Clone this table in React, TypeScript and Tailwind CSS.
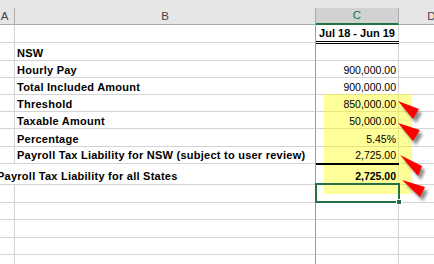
import React from 'react';

type Row = { h: string; label?: string; value?: string; bold?: boolean };

const rows: Row[] = [
  { h: 'h-[18px]', label: 'NSW' },
  { h: 'h-[17px]', label: 'Hourly Pay', value: '900,000.00' },
  { h: 'h-[17px]', label: 'Total Included Amount', value: '900,000.00' },
  { h: 'h-[17px]', label: 'Threshold', value: '850,000.00' },
  { h: 'h-[17px]', label: 'Taxable Amount', value: '50,000.00' },
  { h: 'h-[18px]', label: 'Percentage', value: '5.45%' },
];

const tail = ['h-[17px]', 'h-[18px]', 'h-[17px]', 'h-[17px]'];

const colA = 'w-[20px] -ml-[5px] shrink-0 border-b border-r border-[#d4d4d4]';
const colB = 'w-[301px] shrink-0 flex items-end pl-[2px] border-b border-b-[#d4d4d4] border-r border-r-[#9e9e9e]';
const colC = 'relative w-[83px] shrink-0 flex items-end justify-end pr-[2px] border-b border-r border-[#d4d4d4]';
const colD = 'w-[66px] shrink-0 border-b border-r border-[#d4d4d4]';

const label = 'whitespace-nowrap text-[11px] leading-[13px] font-bold tracking-[0.25px] text-black';
const num = 'relative z-30 whitespace-nowrap text-[10.5px] leading-[13px] text-black';

// red callout arrows pointing at the numbers
const arrows = [
  '398,101 419,109 413,119',
  '398,123 420,130 413,141',
  '400,155 422,166 418,176',
  '402,180 425,187 420,197',
];

export default function App() {
  return (
    <div className="relative w-[434px] h-[264px] overflow-hidden bg-white font-['Liberation_Sans',Arial,sans-serif]">
      {/* column headers */}
      <div className="h-[8px] bg-[#e6e6e6]" />
      <div className="flex h-[17px] bg-[#e6e6e6] text-[11.5px] leading-[13px] text-[#444]">
        <div className="w-[20px] -ml-[5px] shrink-0 flex items-end justify-center pb-[1px] border-b border-r border-[#ababab]">A</div>
        <div className="w-[301px] shrink-0 flex items-end justify-center pb-[1px] border-b border-r border-[#ababab]">B</div>
        <div className="w-[83px] shrink-0 flex items-end justify-center pb-[1px] bg-[#d2d2d2] text-[#217346] border-b-2 border-b-[#217346] border-r border-r-[#ababab]">C</div>
        <div className="w-[66px] shrink-0 flex items-end justify-center pb-[1px] border-b border-r border-[#ababab]">D</div>
      </div>

      {/* row 1 */}
      <div className="flex h-[18px]">
        <div className={colA} />
        <div className={colB} />
        <div className="relative w-[83px] shrink-0 flex items-end justify-center pb-[2px] border-b border-r border-[#d4d4d4]">
          <span className="whitespace-nowrap text-[11px] leading-[13px] font-bold text-black">Jul 18 - Jun 19</span>
          <div className="absolute left-0 -right-px top-[16px] h-[3px] z-10 bg-white border-y border-black" />
        </div>
        <div className={colD} />
      </div>

      {rows.map((r) => (
        <div key={r.label} className={`flex ${r.h}`}>
          <div className={colA} />
          <div className={colB}>
            <span className={label}>{r.label}</span>
          </div>
          <div className={colC}>
            {r.value && <span className={num}>{r.value}</span>}
          </div>
          <div className={colD} />
        </div>
      ))}

      <div className="flex h-[17px]">
        <div className={colA} />
        <div className={`${colB} pb-px`}>
          <span className={label}>Payroll Tax Liability for NSW (subject to user review)</span>
        </div>
        <div className={`${colC} pb-px`}>
          <span className={num}>2,725.00</span>
          <div className="absolute left-0 -right-px -bottom-[2px] h-[2px] z-30 bg-black" />
        </div>
        <div className={colD} />
      </div>

      {/* all states total */}
      <div className="flex h-[21px]">
        <div className="w-[20px] -ml-[5px] shrink-0 flex items-end pl-[2px] pb-px border-b border-[#d4d4d4]">
          <span className={label}>Payroll Tax Liability for all States</span>
        </div>
        <div className={colB} />
        <div className={`${colC} pb-px`}>
          <span className={`${num} font-bold`}>2,725.00</span>
        </div>
        <div className={colD} />
      </div>

      {/* selected row */}
      <div className="flex h-[18px]">
        <div className={colA} />
        <div className={colB} />
        <div className={colC}>
          <div className="absolute -left-px -top-[2px] w-[85px] h-[20px] z-40 border-2 border-[#217346]" />
          <div className="absolute left-[80px] top-[14px] w-[6px] h-[6px] z-40 bg-[#217346] border border-white" />
        </div>
        <div className={colD} />
      </div>

      {tail.map((h, i) => (
        <div key={i} className={`flex ${h}`}>
          <div className={colA} />
          <div className={colB} />
          <div className={colC} />
          <div className={colD} />
        </div>
      ))}

      {/* highlight shape */}
      <div className="absolute left-[324px] top-[94px] w-[88px] h-[100px] z-20 bg-[#ffff00]/40 pointer-events-none" />

      <svg className="absolute left-0 top-0 z-30 pointer-events-none" width="434" height="264" viewBox="0 0 434 264">
        <defs>
          <filter id="sh" x="-50%" y="-50%" width="200%" height="200%">
            <feGaussianBlur stdDeviation="1.6" />
          </filter>
        </defs>
        {arrows.map((p, i) => (
          <g key={i}>
            <polygon points={p} transform="translate(3 4)" fill="#000" opacity="0.45" filter="url(#sh)" />
            <polygon points={p} fill="#ff0000" />
          </g>
        ))}
      </svg>
    </div>
  );
}
